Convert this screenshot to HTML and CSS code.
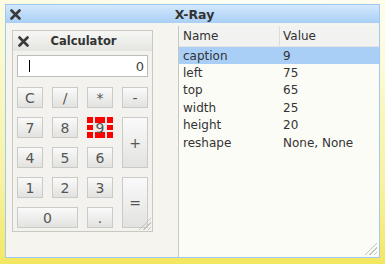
FILE: index.html
```html
<!DOCTYPE html>
<html lang="en">
  <head>
    <meta charset="UTF-8" />
    <title>X-Ray</title>
    <link rel="stylesheet" href="styles.css">
  </head>
  <body>
    <div class="window">
      <div class="titlebar">
        <svg class="close" width="11" height="11" viewBox="0 0 11 11">
          <path d="M1.5 1.5 L9.5 9.5 M9.5 1.5 L1.5 9.5" stroke="#3a3a3a" stroke-width="2.6" stroke-linecap="round"/>
        </svg>
        <span class="title">X-Ray</span>
      </div>
      <div class="window-body">
        <div class="canvas">
          <div class="calc">
            <div class="calc-title">
              <svg class="close" width="11" height="11" viewBox="0 0 11 11">
                <path d="M1.5 1.5 L9.5 9.5 M9.5 1.5 L1.5 9.5" stroke="#3a3a3a" stroke-width="2.6" stroke-linecap="round"/>
              </svg>
              <span class="title">Calculator</span>
            </div>
            <div class="display"><span class="caret"></span><span>0</span></div>
            <div class="keys">
              <div class="key">C</div>
              <div class="key">/</div>
              <div class="key">*</div>
              <div class="key">-</div>
              <div class="key">7</div>
              <div class="key">8</div>
              <div class="key selected">9</div>
              <div class="key tall">+</div>
              <div class="key">4</div>
              <div class="key">5</div>
              <div class="key">6</div>
              <div class="key">1</div>
              <div class="key">2</div>
              <div class="key">3</div>
              <div class="key tall">=</div>
              <div class="key wide">0</div>
              <div class="key">.</div>
            </div>
            <div class="grip"></div>
          </div>
        </div>
        <div class="inspector">
          <div class="row head"><span class="cell">Name</span><span class="cell val">Value</span></div>
          <div class="row current"><span class="cell">caption</span><span class="cell">9</span></div>
          <div class="row"><span class="cell">left</span><span class="cell">75</span></div>
          <div class="row"><span class="cell">top</span><span class="cell">65</span></div>
          <div class="row"><span class="cell">width</span><span class="cell">25</span></div>
          <div class="row"><span class="cell">height</span><span class="cell">20</span></div>
          <div class="row"><span class="cell">reshape</span><span class="cell">None, None</span></div>
          <div class="grip"></div>
        </div>
      </div>
    </div>
  </body>
</html>
```
FILE: styles.css
```css
body {
  margin: 0;
  width: 385px;
  height: 264px;
  overflow: hidden;
  font-family: "DejaVu Sans", sans-serif;
  background:
    radial-gradient(ellipse 260px 120px at 260px 10px, #fffef6 0%, rgba(255, 254, 240, 0) 100%),
    linear-gradient(180deg, #fdfbe0 0%, #f8f2a0 70%, #f3e760 100%);
}
.window {
  margin: 4px 0 0 5px;
  width: 373px;
  height: 252px;
  border: 1px solid #9ec9f3;
  background: #f5f4ef;
  display: flex;
  flex-direction: column;
}
.titlebar {
  height: 18px;
  background: linear-gradient(180deg, #d3e8fc 0%, #a9cff6 100%);
  display: flex;
  align-items: center;
  position: relative;
}
.close {
  margin-left: 4px;
  display: block;
}
.titlebar .title {
  position: absolute;
  left: 0;
  right: 0;
  text-align: center;
  font-weight: bold;
  font-size: 12.5px;
  color: #333;
  padding-left: 4px;
}
.window-body {
  flex: 1;
  display: flex;
  padding-top: 3px;
}
.canvas {
  flex-shrink: 0;
  width: 166px;
  padding: 4px 0 0 6px;
}
.calc {
  width: 139px;
  height: 200px;
  border: 1px solid #c9c9c4;
  background: #f3f2ee;
  position: relative;
}
.calc-title {
  height: 20px;
  background: linear-gradient(180deg, #f7f7f5 0%, #e4e4e0 100%);
  display: flex;
  align-items: center;
  position: relative;
}
.calc-title .close {
  margin-left: 5px;
}
.calc-title .title {
  position: absolute;
  left: 0;
  right: 0;
  text-align: center;
  font-weight: bold;
  font-size: 11.5px;
  color: #333;
  padding-left: 2px;
}
.display {
  margin: 4px 4px 0 4px;
  height: 20px;
  border: 1px solid #bdbdb8;
  background: #fff;
  display: flex;
  align-items: center;
  justify-content: space-between;
  padding: 0 3px 0 11px;
  font-size: 13px;
  color: #444;
}
.caret {
  width: 1px;
  height: 12px;
  background: #000;
}
.keys {
  margin: 10px 4px 0 4px;
  display: grid;
  grid-template-columns: repeat(4, 26px);
  grid-auto-rows: 21px;
  column-gap: 9px;
  row-gap: 9px;
}
.key {
  border: 1px solid #cacac6;
  background: linear-gradient(180deg, #fafafa 0%, #e2e2e0 100%);
  display: flex;
  align-items: center;
  justify-content: center;
  font-size: 14px;
  color: #555;
}
.key.tall {
  grid-row: span 2;
}
.key.wide {
  grid-column: span 2;
}
.key.selected {
  border: none;
  background-color: #ececea;
  background-image:
    linear-gradient(#f00, #f00), linear-gradient(#f00, #f00), linear-gradient(#f00, #f00),
    linear-gradient(#f00, #f00), linear-gradient(#f00, #f00),
    linear-gradient(#f00, #f00), linear-gradient(#f00, #f00), linear-gradient(#f00, #f00);
  background-repeat: no-repeat;
  background-size:
    6px 6px, 10px 6px, 6px 6px,
    6px 5px, 6px 5px,
    6px 6px, 10px 6px, 6px 6px;
  background-position:
    0 0, 8px 0, 20px 0,
    0 8px, 20px 8px,
    0 15px, 8px 15px, 20px 15px;
}
.grip {
  position: absolute;
  right: 1px;
  bottom: 1px;
  width: 14px;
  height: 14px;
  background: repeating-linear-gradient(135deg, transparent 0, transparent 2px, #c4c4c0 2px, #c4c4c0 3px);
  clip-path: polygon(100% 0, 100% 100%, 0 100%);
}
.inspector {
  flex: 1;
  min-width: 0;
  border-left: 1px solid #c6c6c2;
  background: #fcfcf7;
  position: relative;
  font-size: 12px;
  color: #333;
}
.row {
  height: 17.4px;
  display: flex;
  align-items: center;
}
.row.head {
  height: 20px;
  background: #f2f2f0;
  border-bottom: 1px solid #e4e4e0;
  color: #333;
}
.row.current {
  background: #a9cff6;
}
.cell {
  box-sizing: border-box;
  width: 100px;
  padding-left: 4px;
}
.row.head .val {
  border-left: 1px solid #ddd;
  height: 20px;
  line-height: 20px;
  padding-left: 3px;
}
.inspector .grip {
  right: 2px;
  bottom: 2px;
}
```
